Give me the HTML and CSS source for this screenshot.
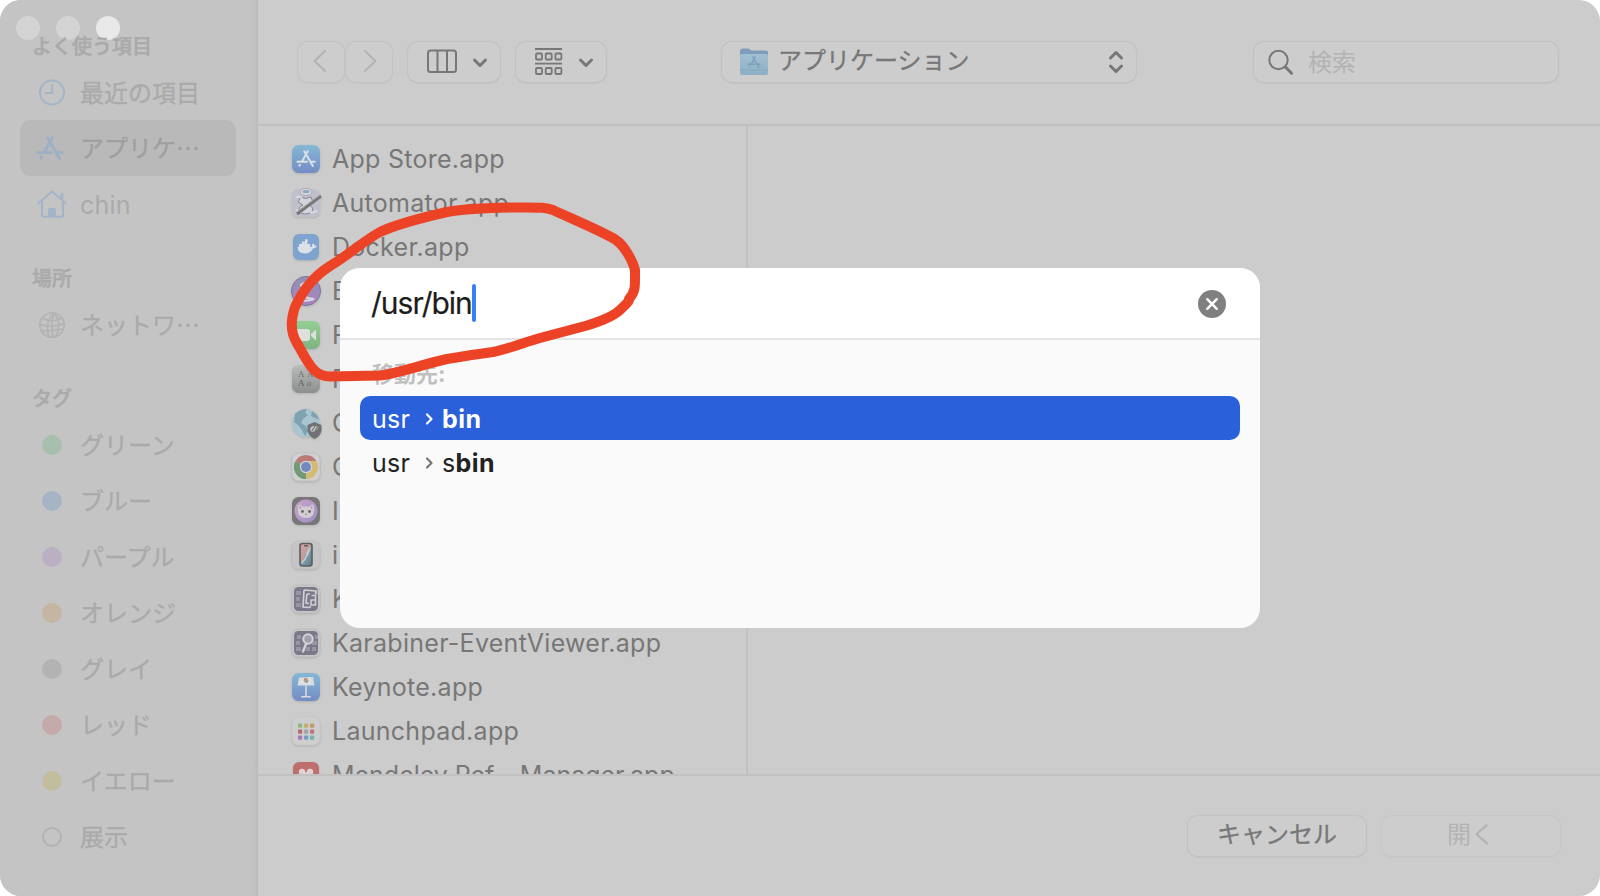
FILE: index.html
```html
<!DOCTYPE html>
<html lang="ja">
<head>
<meta charset="utf-8">
<title>アプリケーション</title>
<link rel="stylesheet" href="styles.css">
</head>
<body>
<svg width="0" height="0" class="defs">
  <defs>
    <linearGradient id="gBlue" x1="0" y1="0" x2="0" y2="1"><stop offset="0" stop-color="#85b8d6"/><stop offset="1" stop-color="#748cc4"/></linearGradient>
    <linearGradient id="gPurple" x1="0" y1="0" x2="0" y2="1"><stop offset="0" stop-color="#9290b4"/><stop offset="1" stop-color="#a884c0"/></linearGradient>
    <linearGradient id="gGreen" x1="0" y1="0" x2="0" y2="1"><stop offset="0" stop-color="#93cf94"/><stop offset="1" stop-color="#7fb481"/></linearGradient>
    <linearGradient id="gGray" x1="0" y1="0" x2="0" y2="1"><stop offset="0" stop-color="#b9bcbb"/><stop offset="1" stop-color="#8d8f8e"/></linearGradient>
    <linearGradient id="gPhone" x1="0" y1="0" x2="1" y2="1"><stop offset="0" stop-color="#c9a9a4"/><stop offset=".48" stop-color="#c49b97"/><stop offset=".5" stop-color="#82a3b2"/><stop offset="1" stop-color="#56788a"/></linearGradient>
    <linearGradient id="gCat" x1="0" y1="0" x2="1" y2="1"><stop offset="0" stop-color="#c9a5c4"/><stop offset="1" stop-color="#9d8fc9"/></linearGradient>
    <linearGradient id="gFolder" x1="0" y1="0" x2="0" y2="1"><stop offset="0" stop-color="#a0c0d3"/><stop offset="1" stop-color="#8db0c6"/></linearGradient>
    <symbol id="astore" viewBox="0 0 28 28"><g fill="none" stroke="currentColor" stroke-width="2.900" stroke-linecap="round"><path d="M16.400 3.800 8.600 17.800M11.600 3.800l2 3.400M15.600 10.600l8 13.800M2 18.600h13.400M21.400 18.600h4.800M5.400 23l-.6 1"/></g></symbol>
  </defs>
</svg>
<div class="window">
  <aside class="sidebar">
    <div class="lights"><i></i><i></i><i class="on"></i></div>
    <h2 class="head first">よく使う項目</h2>
    <div class="item blue"><svg class="ic" viewBox="0 0 30 30"><g fill="none" stroke="currentColor" stroke-width="2"><circle cx="15" cy="15.500" r="12"/><path d="M15.200 7V16H8"/></g></svg><span>最近の項目</span></div>
    <div class="item blue sel"><svg class="ic" viewBox="0 0 28 28"><use href="#astore"/></svg><span>アプリケ…</span></div>
    <div class="item blue"><svg class="ic" viewBox="0 0 30 30"><g fill="none" stroke="currentColor" stroke-width="2" stroke-linejoin="round" stroke-linecap="round"><path d="M1 14.500 15 2.500l14 12M5 12v14.500q0 1.200 1.200 1.200h18.600q1.200 0 1.200-1.200V12"/><path d="M25 9.500V5.500" stroke-width="3"/></g><path d="M11 27v-6.500q0-1.500 1.500-1.500h5q1.500 0 1.500 1.500V27z" fill="currentColor"/></svg><span class="latin">chin</span></div>
    <h2 class="head">場所</h2>
    <div class="item"><svg class="ic" viewBox="0 0 30 30"><g fill="none" stroke="#b2b2b2" stroke-width="1.600"><circle cx="15" cy="15" r="12.200"/><path d="M17 3C10 9 9 20 12 27M17 3c-2 6-2.500 16-1 24M17 3c6 7 6 16 2 23.500M5.500 8q10 5.500 19 0M3 14.500q12 3.500 24-1M4.500 20.500q10 1 21.500-1.500"/></g></svg><span>ネットワ…</span></div>
    <h2 class="head tags">タグ</h2>
    <div class="item"><b class="dot green"></b><span>グリーン</span></div>
    <div class="item"><b class="dot azure"></b><span>ブルー</span></div>
    <div class="item"><b class="dot purple"></b><span>パープル</span></div>
    <div class="item"><b class="dot orange"></b><span>オレンジ</span></div>
    <div class="item"><b class="dot gray"></b><span>グレイ</span></div>
    <div class="item"><b class="dot red"></b><span>レッド</span></div>
    <div class="item"><b class="dot yellow"></b><span>イエロー</span></div>
    <div class="item"><b class="dot ring"></b><span>展示</span></div>
  </aside>
  <main class="main">
    <header class="toolbar">
      <button class="btn nav"><svg width="46" height="40" viewBox="0 0 46 40"><path d="M27 9 16.500 19 27 29" /></svg></button>
      <button class="btn nav fwd"><svg width="46" height="40" viewBox="0 0 46 40"><path d="M19 9 29.500 19 19 29"/></svg></button>
      <button class="btn view"><svg width="92" height="40" viewBox="0 0 92 40" fill="none" stroke="#777" stroke-width="2"><rect x="20" y="8.500" width="28" height="21.500" rx="2.500"/><path d="M29.500 9v21M39 9v21"/><path d="m66.500 18 5.500 5.500 5.500-5.500" stroke-width="3" stroke-linecap="round" stroke-linejoin="round"/></svg></button>
      <button class="btn group"><svg width="90" height="40" viewBox="0 0 90 40" fill="none" stroke="#777" stroke-width="1.800"><path d="M19 7h27M19 21.700h27"/><rect x="20" y="11.500" width="6" height="6" rx="1"/><rect x="29.700" y="11.500" width="6" height="6" rx="1"/><rect x="39.400" y="11.500" width="6" height="6" rx="1"/><rect x="20" y="26" width="6" height="6" rx="1"/><rect x="29.700" y="26" width="6" height="6" rx="1"/><rect x="39.400" y="26" width="6" height="6" rx="1"/><path d="m64.500 18 5.500 5.500 5.500-5.500" stroke-width="3" stroke-linecap="round" stroke-linejoin="round"/></svg></button>
      <div class="btn popup">
        <svg width="30" height="30" viewBox="0 0 30 30"><path d="M1 4q0-2.500 2.500-2.500h5.500q1 0 2 1t2 1h14q2 0 2 2V14H1z" fill="#7f9dba"/><rect x="1" y="7" width="28" height="21" rx="2" fill="url(#gFolder)"/><path d="M1 23h28" stroke="#83a6bd" stroke-width=".8"/><use href="#astore" x="8" y="8" width="14" height="14" color="#7f9dba"/></svg>
        <span>アプリケーション</span>
        <svg class="updown" width="16" height="24" viewBox="0 0 16 24" fill="none" stroke="#777" stroke-width="3" stroke-linecap="round" stroke-linejoin="round"><path d="M2.500 8 8 2.500 13.500 8M2.500 16 8 21.500 13.500 16"/></svg>
      </div>
      <div class="btn search"><svg width="28" height="28" viewBox="0 0 28 28" fill="none" stroke="#777" stroke-linecap="round"><circle cx="11.500" cy="12" r="9.200" stroke-width="2"/><path d="m18.500 19 6 6.300" stroke-width="3"/></svg><span>検索</span></div>
    </header>
    <section class="browser">
      <ul class="files">
        <li><svg viewBox="0 0 32 32"><rect x="2" y="2" width="28" height="28" rx="6.500" fill="url(#gBlue)"/><use href="#astore" x="6" y="5.500" width="20" height="20" color="#d9e0e6"/></svg><span>App Store.app</span></li>
        <li><svg viewBox="0 0 32 32"><rect x="2" y="2" width="28" height="28" rx="6.500" fill="#c0c0cc"/><ellipse cx="16" cy="5" rx="6" ry="3.500" fill="#d6d7da" stroke="#999" stroke-width=".6"/><ellipse cx="16" cy="4.500" rx="3.500" ry="1.500" fill="#86a9c4"/><path d="M11 10q4 3 10 0l2 5-4 3q5 2 3 7-8 4-13 0-1-5 4-7l-5-3z" fill="#d4d4dc" stroke="#858591"/><path d="M6 11q2-3 6 0M7 22q1 4 5 3M20 25q6 1 7-2" fill="none" stroke="#d9d9df" stroke-width="2"/><path d="M7 27 31 9" stroke="#777" stroke-width="3"/><path d="M8 24 30 8" stroke="#a6a6a9"/></svg><span>Automator.app</span></li>
        <li><svg viewBox="0 0 32 32"><rect x="3" y="3" width="26" height="26" rx="6" fill="#7ea3cf"/><path d="M7.500 16h14q1-.5.500-2.500 1-1.500 1.500-1 .8 1.200 1 2 1.500-.2 2.500.5-1 2.200-4 2.500-2.500 5-8.500 5-6.500 0-7-6.500zM9 13h2.800v3H9zM11.800 13h2.800v3h-2.800zM14.600 13h2.800v3h-2.800zM17.400 13h2.800v3h-2.800zM11.800 10.600h2.700v2.400h-2.700zM14.700 10.600h2.700v2.400h-2.700zM15 8.300h2.600v2.300H15z" fill="#dbe1e7"/></svg><span>Docker.app</span></li>
        <li><svg viewBox="0 0 32 32"><circle cx="16" cy="16" r="14.500" fill="url(#gPurple)" stroke="#7c7792"/><path d="M22 7q-8 0-11 3 0 3 7 3-7 2-7 6 2 4 13 5-5 2-12 2" fill="none" stroke="#ddd6e3" stroke-width="2"/></svg><span>Emacs.app</span></li>
        <li><svg viewBox="0 0 32 32"><rect x="2" y="2" width="28" height="28" rx="6.500" fill="url(#gGreen)"/><rect x="5" y="10" width="15" height="12" rx="3" fill="#dde0dd"/><path d="m21 15 5-4.500v11L21 17z" fill="#dde0dd"/></svg><span>FaceTime.app</span></li>
        <li><svg viewBox="0 0 32 32"><rect x="2" y="2" width="28" height="28" rx="6.500" fill="url(#gGray)"/><g class="fontglyph"><text x="8" y="14">A</text><text x="17" y="14">A</text><text x="8" y="23" font-weight="700">A</text><text x="17" y="23" font-style="italic">a</text></g></svg><span>Font Book.app</span></li>
        <li><svg viewBox="0 0 32 32"><circle cx="16" cy="16" r="14" fill="#a9c6d0"/><path d="M5 7q5-5 12-5l-2 4 3 2-5 4-2 4 5 3 2 5-3 5-3-6-4-5-4-3zM22 4l5 4 2 5-4-2-4-2z" fill="#7fa2b1"/><path d="m24.500 15 7 3v6q-1 5-7 8-6-3-7-8v-6z" fill="#6f7375"/><path d="M24.500 19c-3 0-5 2-4 4.500s6 1 8-3c-1-1-2-1.500-4-1.500z" fill="#c9c9c9"/><path d="m22 24 3-5m0 5 3-5" stroke="#6f7375" stroke-width="1.200"/></svg><span>GlobalProtect.app</span></li>
        <li><svg viewBox="0 0 32 32"><rect x="2" y="2" width="28" height="28" rx="6.500" fill="#d0d0d0" stroke="#bcbcbc" stroke-width=".8"/><path d="M16 16 5.600 10A12 12 0 0 1 26.400 10z" fill="#bb7a77"/><path d="M16 16 26.400 10A12 12 0 0 1 16 28z" fill="#d4bb73"/><path d="M16 16 16 28A12 12 0 0 1 5.600 10z" fill="#729a76"/><path d="M16 10h10.400l-5 9z" fill="#d4bb73"/><path d="M5.600 10 11 19l5 3v6A12 12 0 0 1 5.600 10z" fill="#729a76"/><circle cx="16" cy="16" r="6.200" fill="#d4d4d4"/><circle cx="16" cy="16" r="4.900" fill="#7189c0"/></svg><span>Google Chrome.app</span></li>
        <li><svg viewBox="0 0 32 32"><rect x="2" y="2" width="28" height="28" rx="6.500" fill="#777679"/><circle cx="16" cy="16" r="11.500" fill="url(#gCat)"/><path d="M9 9.500q2 0 3.500 2h7q1.500-2 3.500-2 1.500 3 1 6 0 7.500-8 7.500t-8-7.500q-.5-3 1-6z" fill="#d2ccd3"/><path d="m9.500 11 .3 3.500L12 12zM22.500 11l-.3 3.500L20 12z" fill="#bf97a9"/><circle cx="12.500" cy="16.500" r="1.400" fill="#666"/><circle cx="19.500" cy="16.500" r="1.400" fill="#666"/><path d="M14.800 18.700h2.400L16 20.200z" fill="#777"/></svg><span>Ice.app</span></li>
        <li><svg viewBox="0 0 32 32"><rect x="2" y="2" width="28" height="28" rx="6.500" fill="#c5c5c5" stroke="#bebebe" stroke-width=".6"/><rect x="10" y="4.500" width="12" height="22.500" rx="2.500" fill="url(#gPhone)" stroke="#5b5d5f" stroke-width="1.600"/><path d="M11.500 23q5-5 5-9 2-5 4.500-6-2 6-3 8-2 5-6.500 9z" fill="#c8d0d2"/><path d="M14 6.800h4" stroke="#555" stroke-width="1.300"/></svg><span>iPhone Mirroring.app</span></li>
        <li><svg viewBox="0 0 32 32"><rect x="2" y="2" width="28" height="28" rx="6.500" fill="#c6c6c6" stroke="#bcbcbc" stroke-width=".8"/><rect x="4" y="4" width="24" height="24" rx="4.500" fill="#7b788a"/><path d="M6 8h5v4H6zM6 14h4v4H6zM6 20h5v4H6zM25 8h3v4h-3z" fill="#9896a4"/><path d="m14 7 12 1-.5 3M14 7l-1 17 6 .5 2-1M17 11l-1 9 3 .5M17 11h3" fill="none" stroke="#d0d0d4" stroke-width="1.700"/><path d="M21 17h4.500v5H21zM21.500 12.500h4V17" fill="none" stroke="#d0d0d4" stroke-width="1.600"/></svg><span>Karabiner-Elements.app</span></li>
        <li><svg viewBox="0 0 32 32"><rect x="2" y="2" width="28" height="28" rx="6.500" fill="#c6c6c6" stroke="#bcbcbc" stroke-width=".8"/><rect x="4" y="4" width="24" height="24" rx="4.500" fill="#7b788a"/><path d="M7 8h4v4H7zM6 14h4v4H6zM6 20h5v4H6zM25 8h3v4h-3zM22 14h5v4h-5zM16 20h4v4h-4zM22 20h4v4h-4z" fill="#9896a4"/><circle cx="18" cy="12" r="4.700" fill="#a3a2ac" stroke="#d3d3d6" stroke-width="2"/><path d="m16 17-3 7.500" stroke="#d3d3d6" stroke-width="2.400" stroke-linecap="round"/></svg><span>Karabiner-EventViewer.app</span></li>
        <li><svg viewBox="0 0 32 32"><rect x="2" y="2" width="28" height="28" rx="6.500" fill="url(#gBlue)"/><path d="m9 6.500 14-.5 1.500 8.500h-17z" fill="#d8dbde"/><path d="M11 7.500h10v5.500H10.500z" fill="#e0e2e4"/><circle cx="16" cy="9.500" r="2.400" fill="#bda488"/><path d="M16 7a2.500 2.500 0 0 0-2.300 2.500H16z" fill="#be7f8b"/><path d="M16 9.500h2.400A2.400 2.400 0 0 1 16 12z" fill="#76a7b7"/><path d="M15.200 14.500h1.600V25h4v1.400h-9.600V25h4z" fill="#d6d9dd"/></svg><span>Keynote.app</span></li>
        <li><svg viewBox="0 0 32 32"><rect x="2" y="2" width="28" height="28" rx="6.500" fill="#cdcecd" stroke="#c5c5c5" stroke-width=".5"/><g><rect x="8" y="8.500" width="4.200" height="4.200" rx="1" fill="#8fb97c"/><rect x="14" y="8.500" width="4.200" height="4.200" rx="1" fill="#c4ae6d"/><rect x="20" y="8.500" width="4.200" height="4.200" rx="1" fill="#c39a68"/><rect x="8" y="14.500" width="4.200" height="4.200" rx="1" fill="#b46d6d"/><rect x="14" y="14.500" width="4.200" height="4.200" rx="1" fill="#a3a6a9"/><rect x="20" y="14.500" width="4.200" height="4.200" rx="1" fill="#c4717e"/><rect x="8" y="20.500" width="4.200" height="4.200" rx="1" fill="#a67ab8"/><rect x="14" y="20.500" width="4.200" height="4.200" rx="1" fill="#719fc4"/><rect x="20" y="20.500" width="4.200" height="4.200" rx="1" fill="#78b3a5"/></g></svg><span>Launchpad.app</span></li>
        <li><svg viewBox="0 0 32 32"><rect x="3" y="3" width="26" height="26" rx="6" fill="#bf6e70"/><circle cx="12" cy="13" r="3.200" fill="#e0d3d3"/><circle cx="20" cy="13" r="3.200" fill="#e0d3d3"/><circle cx="16" cy="15.500" r="2.600" fill="#e0d3d3"/></svg><span class="mend">Mendeley Ref - Manager.app</span></li>
      </ul>
      <div class="preview"></div>
    </section>
    <footer class="footer">
      <button class="btn act">キャンセル</button>
      <button class="btn act off">開く</button>
    </footer>
  </main>
  <div class="goto">
    <div class="field"><span class="path">/usr/bin</span><i class="caret"></i>
      <svg class="clear" width="28" height="28" viewBox="0 0 28 28"><circle cx="14" cy="14" r="14" fill="#808080"/><path d="m9.200 9.200 9.600 9.600M18.800 9.200l-9.600 9.600" stroke="#fff" stroke-width="2.400" stroke-linecap="round"/></svg>
    </div>
    <div class="results">
      <div class="label">移動先:</div>
      <div class="row hit"><span class="seg">usr</span><svg width="10" height="14" viewBox="0 0 10 14"><path d="m2 2.500 4.500 4.500L2 11.500"/></svg><span><strong>bin</strong></span></div>
      <div class="row"><span class="seg">usr</span><svg width="10" height="14" viewBox="0 0 10 14"><path d="m2 2.500 4.500 4.500L2 11.500"/></svg><span>s<strong>bin</strong></span></div>
    </div>
  </div>
  <svg class="scribble" width="1600" height="896" viewBox="0 0 1600 896"><path d="M629 299C636 291 635 286 635 270C633 262 625 246 616 240C606 233 570 218 553 210C545 207 540 207.500 513 207.500C480 208 465 209 447 212C425 217 395 225 380 232C362 242 350 254 330 266C310 279 302 293 295 307C290 322 291 334 297 343C303 354 308 364 314 370C319 375 323 376.500 330 376.500L380 375.500C400 373 420 365 447 359C465 356 478 354 493 352C512 348 525 342 540 338L587 325.500C605 320 616 315 622 308C628 302 629 302 629 299"/></svg>
</div>
</body>
</html>
```
FILE: styles.css
```css
* { box-sizing: border-box; }
body { margin: 0; background: #fff; font-family: Inter, "Noto Sans CJK JP", sans-serif; }
.defs { position: absolute; }
.window { position: relative; display: flex; width: 1600px; height: 896px; border-radius: 21px; overflow: hidden; background: #ccc; color: #777; }

.sidebar { width: 258px; padding: 0 22px 0 20px; background: linear-gradient(90deg, #c4c4c4 251px, #c0c0c0 256px, #b9b9b9 258px); color: #aaa; font-family: "Noto Sans CJK JP", sans-serif; -webkit-text-stroke: 0.3px currentColor; }
.lights { position: absolute; left: 16px; top: 16px; display: flex; gap: 16px; }
.lights i { width: 24px; height: 24px; border-radius: 50%; background: #d4d4d4; }
.lights .on { background: #e9e9e9; }
.head { position: relative; height: 65px; margin: 0; padding: 31px 0 0 12px; font-size: 20px; line-height: 30px; font-weight: 500; -webkit-text-stroke-width: 0.5px; }
.head.first { height: 64px; }
.head.tags { height: 64px; padding-top: 30px; }
.item { display: flex; align-items: center; height: 56px; padding-left: 16px; gap: 14px; border-radius: 11px; font-size: 24px; line-height: 36px; white-space: nowrap; }
.item span { padding-bottom: 3px; }
.item.blue span { padding-bottom: 1px; }
.item.sel span { padding-bottom: 3px; }
.item.blue .latin { padding: 1px 0 0; font-family: Inter, sans-serif; font-size: 25px; letter-spacing: 0.2px; -webkit-text-stroke-width: 0; }
.ic { width: 30px; height: 30px; margin: 0 -1px 0 1px; flex: none; }
.blue .ic { color: #a3b4c9; }
.sel .ic { color: #9dafc5; width: 28px; height: 28px; margin: 0; padding: 0; }
.sel { gap: 16px; background: #b9b9b9; color: #9f9f9f; }
.dot { width: 20px; height: 20px; margin: 0 4px 0 6px; border-radius: 50%; flex: none; }
.green { background: #a7bfac; }
.azure { background: #a6b5c6; }
.purple { background: #bbafc3; }
.orange { background: #c5b5a3; }
.gray { background: #b3b3b3; }
.red { background: #c6a9a9; }
.yellow { background: #c3bd9f; }
.ring { border: 2px solid #b3b3b3; }

.main { flex: 1; display: flex; flex-direction: column; min-width: 0; }
.toolbar { display: flex; height: 126px; padding: 42px 0 0 40px; border-bottom: 2px solid #c1c1c1; }
.btn { height: 40px; padding: 0; border: 0; border-radius: 10px; background: #cdcdcd; box-shadow: 0 0 1px 0.3px #c2c2c2, 0 1px 1.5px #b0b0b0; color: #777; font: 24px/36px Inter, "Noto Sans CJK JP", sans-serif; -webkit-text-stroke: 0.3px currentColor; }
.btn svg { display: block; flex: none; }
.nav { width: 46px; box-shadow: 0 0 1px 0.3px #c4c4c4, 0 1px 1.5px #bababa; }
.nav path { fill: none; stroke: #b3b3b3; stroke-width: 2; stroke-linecap: round; stroke-linejoin: round; }
.fwd { margin-left: 2px; }
.view { width: 92px; margin-left: 16px; }
.group { width: 90px; margin-left: 16px; }
.popup { display: flex; align-items: center; width: 414px; margin-left: 116px; padding: 0 12px 0 17px; }
.popup span { flex: 1; padding: 0 0 2px 9px; }
.search { display: flex; align-items: center; width: 304px; margin-left: 118px; padding-left: 13px; gap: 13px; }
.search span { padding-top: 1px; color: #b3b3b3; -webkit-text-stroke-width: 0; }

.browser { display: flex; height: 648px; overflow: hidden; }
.files { width: 490px; margin: 0; padding: 11px 0 0 32px; list-style: none; border-right: 2px solid #c1c1c1; }
.files li { display: flex; align-items: center; gap: 10px; height: 44px; font-size: 25px; letter-spacing: 0.27px; white-space: nowrap; }
.files .mend { letter-spacing: -0.02px; }
.files svg { width: 32px; height: 32px; flex: none; filter: drop-shadow(0 1px 1px #0002); }
.fontglyph { font: 9px "Liberation Serif", serif; fill: #6c6e6d; }
.preview { flex: 1; }

.footer { display: flex; justify-content: flex-end; gap: 16px; flex: 1; padding: 40px 40px 0 0; border-top: 2px solid #c1c1c1; }
.act { width: 178px; padding-bottom: 2px; }
.off { color: #b3b3b3; box-shadow: 0 0 1px 0.3px #c7c7c7, 0 1px 1.5px #bebebe; -webkit-text-stroke-width: 0; }

.goto { position: absolute; left: 340px; top: 268px; width: 920px; height: 360px; border-radius: 20px; overflow: hidden; background: #fafafa; color: #222; }
.field { display: flex; align-items: center; height: 72px; padding: 0 34px 0 32px; background: #fff; border-bottom: 2px solid #e5e5e5; }
.path { margin-left: -1px; font-size: 30px; letter-spacing: -1px; color: #1c1c1c; -webkit-text-stroke: 0.2px currentColor; }
.caret { width: 4px; height: 38px; border-radius: 2px; background: #3b7ff8; }
.clear { margin: 2px 0 0 auto; }
.results { padding: 18px 20px 0; }
.label { height: 38px; padding-left: 12px; font-size: 22px; line-height: 32px; font-weight: 700; color: #c0c0c0; }
.row { display: flex; align-items: center; height: 44px; padding: 1px 0 0 12px; border-radius: 10px; font-size: 25px; letter-spacing: 0.2px; }
.row strong { letter-spacing: 0.5px; }
.seg { width: 53px; }
.row svg { margin-right: 7px; fill: none; stroke: #777; stroke-width: 2.2; stroke-linecap: round; stroke-linejoin: round; }
.hit { background: #2a61db; color: #fff; }
.hit svg { stroke: #fff; }
.scribble { position: absolute; left: 0; top: 0; fill: none; stroke: #ec4327; stroke-width: 10; stroke-linecap: round; stroke-linejoin: round; }
```
